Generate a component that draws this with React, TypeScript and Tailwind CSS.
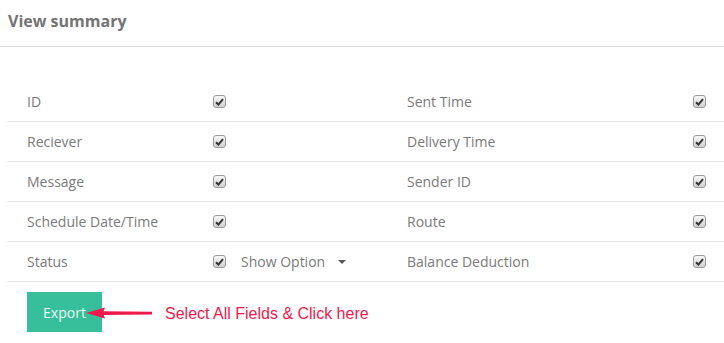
import React from "react";

type Row = { left: string; right: string; option?: boolean };

const rows: Row[] = [
  { left: "ID", right: "Sent Time" },
  { left: "Reciever", right: "Delivery Time" },
  { left: "Message", right: "Sender ID" },
  { left: "Schedule Date/Time", right: "Route" },
  { left: "Status", right: "Balance Deduction", option: true },
];

function Check() {
  return (
    <span className="flex h-[13px] w-[13px] items-center justify-center rounded-[3px] border border-[#9a9a9a] bg-gradient-to-b from-[#f7f7f7] to-[#d2d2d2]">
      <svg width="9" height="8" viewBox="0 0 9 8">
        <path d="M1 4.2 L3.4 6.6 L8 1.2" fill="none" stroke="#333" strokeWidth="2" />
      </svg>
    </span>
  );
}

export default function App() {
  return (
    <div className="w-[724px] bg-white font-['Open_Sans',sans-serif] text-[14px] text-[#7a7a7a]">
      <div className="h-[47px] border-b border-[#dcdcdc] pl-2 pt-[9px]">
        <h2 className="text-[16px] font-bold text-[#747474]">View summary</h2>
      </div>

      <div className="ml-[7px] mt-[35px]">
        {rows.map((r) => (
          <div key={r.left} className="flex h-[40px] items-center border-b border-[#e6e6e6]">
            <div className="w-[206px] pl-5">{r.left}</div>
            <Check />
            <div className="flex w-[181px] items-center pl-[15px]">
              {r.option ? (
                <>
                  <span>Show Option</span>
                  <span className="ml-[13px] mt-[1px] h-0 w-0 border-x-[4px] border-t-[4px] border-x-transparent border-t-[#555]" />
                </>
              ) : null}
            </div>
            <div className="w-[286px]">{r.right}</div>
            <Check />
          </div>
        ))}
      </div>

      <div className="relative flex h-[62px] items-start pl-[27px] pt-[10px]">
        <button className="h-[40px] w-[75px] bg-[#37bf9b] text-[14px] text-[#eefaf6]">Export</button>
        {/* annotation arrow over the button */}
        <svg
          className="absolute left-[86px] top-[24px]"
          width="68"
          height="14"
          viewBox="0 0 68 14"
        >
          <path d="M16 5.3 L66 5.8 L66 8.4 L16 8.9 Z" fill="#ee1a4c" />
          <path d="M0 7 L19 1.5 L17 7 L19 12.5 Z" fill="#ee1a4c" />
        </svg>
        <span className="ml-[63px] mt-[10px] font-['Liberation_Sans',Arial,sans-serif] text-[16px] text-[#ee1a4c]">
          Select All Fields &amp; Click here
        </span>
      </div>
    </div>
  );
}
